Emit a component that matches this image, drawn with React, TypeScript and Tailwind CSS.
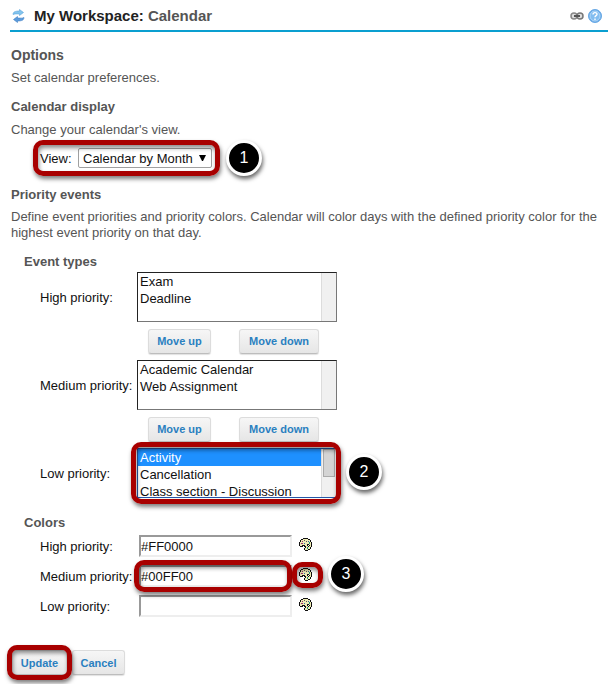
import type { ReactNode } from "react";

function Highlight({ className }: { className: string }) {
  return (
    <span
      aria-hidden="true"
      className={`pointer-events-none absolute z-10 rounded-[10px] border-[5px] border-[#a80000] shadow-[1px_3px_4px_rgba(0,0,0,0.5),inset_1px_3px_4px_rgba(0,0,0,0.45)] ${className}`}
    />
  );
}

function Step({ n, className }: { n: number; className: string }) {
  return (
    <span
      className={`absolute z-20 flex size-9 items-center justify-center rounded-full border-[3px] border-white bg-black text-base text-white shadow-[1px_3px_4px_rgba(0,0,0,0.6)] ${className}`}
    >
      {n}
    </span>
  );
}

function Button({ children, className = "" }: { children: ReactNode; className?: string }) {
  return (
    <button
      type="button"
      className={`h-[25px] rounded-[3px] border border-[#dcdcdc] border-b-[#bdbdbd] bg-linear-to-b from-[#f6f6f6] to-[#e6e6e6] text-[11px] leading-4 font-bold text-[#2a80c0] shadow-[0_1px_1px_rgba(0,0,0,0.12)] ${className}`}
    >
      {children}
    </button>
  );
}

function Palette() {
  return (
    <svg width="14" height="14" viewBox="0 0 14 14" shapeRendering="crispEdges" aria-hidden="true">
      <path
        d="M4 0H9V1H11V2H12V4H13V9H12V11H11V12H9V13H6V12H5V10H6V9H5V8H4V9H1V8H0V4H1V2H2V1H4Z"
        fill="#111"
      />
      <path
        d="M4 1H9V2H11V4H12V9H11V11H9V12H6V10H7V8H6V7H3V8H1V4H2V2H4Z"
        fill="#eeebb4"
      />
      <path d="M8 6h2v1h1v1h-1v1H9V8H8z" fill="#111" />
      <path d="M9 7h1v1H9z" fill="#fff" />
      <path d="M3 3h1v1H3zM2 5h2v1H2z" fill="#a03070" />
      <path d="M5 2h1v1H5zM7 3h1v1H7z" fill="#555" />
      <path d="M9 3h1v1H9zM5 5h1v1H5z" fill="#3060a0" />
      <path d="M10 4h1v2h-1zM8 9h1v2H8z" fill="#189878" />
    </svg>
  );
}

function EventList({
  id,
  label,
  items,
  selected = [],
  scrolls = false,
  marker,
}: {
  id: string;
  label: string;
  items: string[];
  selected?: string[];
  scrolls?: boolean;
  marker?: ReactNode;
}) {
  return (
    <div className="flex items-center">
      <label htmlFor={id} className="w-[97px] pt-[2px] whitespace-nowrap">
        {label}
      </label>
      <div
        className={`relative flex h-[50px] w-[200px] border ${
          scrolls ? "border-[#2458a8]" : "border-t-[#222] border-r-[#777] border-b-[#777] border-l-[#222]"
        }`}
      >
        <select
          id={id}
          multiple
          size={3}
          defaultValue={selected}
          className="h-full min-w-0 flex-1 appearance-none overflow-hidden bg-white p-0 outline-none"
        >
          {items.map((item) => (
            <option
              key={item}
              className="h-[17px] min-h-0 px-[2px] pt-px pb-0 text-[13px] leading-4 checked:bg-[linear-gradient(#1e90ff,#1e90ff)] checked:[-webkit-text-fill-color:white]"
            >
              {item}
            </option>
          ))}
        </select>
        <div className="w-[15px] border-l border-[#dcdcdc] bg-[#f0f0f0]">
          {scrolls && <div className="ml-px h-7 w-3 border border-[#aaa] bg-[#d4d4d4]" />}
        </div>
        {marker}
      </div>
    </div>
  );
}

function MoveButtons() {
  return (
    <div className="ml-[108px] flex h-[38px] items-center gap-7">
      <Button className="w-[63px]">Move up</Button>
      <Button className="w-20">Move down</Button>
    </div>
  );
}

function ColorRow({
  id,
  label,
  value,
  marked = false,
}: {
  id: string;
  label: string;
  value: string;
  marked?: boolean;
}) {
  return (
    <div className="flex h-[30px] items-center">
      <label htmlFor={id} className="w-[99px] pt-[2px] whitespace-nowrap">
        {label}
      </label>
      <div className="relative mr-[7px] flex">
        <input
          id={id}
          type="text"
          defaultValue={value}
          className="h-[22px] w-[153px] border-2 border-t-[#999] border-r-[#eee] border-b-[#eee] border-l-[#999] bg-white text-[13px] outline-none"
        />
        {marked && <Highlight className="-inset-y-[5px] right-0 -left-[5px]" />}
      </div>
      <button type="button" aria-label={`Pick color, ${label}`} className="relative -mt-[2px]">
        <Palette />
        {marked && (
          <>
            <Highlight className="-inset-y-[6px] -right-[10px] -left-[7px]" />
            <Step n={3} className="-top-[12px] left-[29px]" />
          </>
        )}
      </button>
    </div>
  );
}

export default function App() {
  return (
    <main className="bg-white pb-[9px] font-['Liberation_Sans',Arial,sans-serif] text-[13px] leading-4 text-[#111]">
      <header className="mr-[2px] ml-[10px] flex h-8 items-center border-b-2 border-[#0a9fd0] pt-[2px] pr-[6px] pl-[2px]">
        <button type="button" aria-label="Reload">
          <svg width="13" height="14" viewBox="0 0 13 14" aria-hidden="true">
            <path d="M1 5.500C1 3 3 2 7.500 2V.5L11.500 3.500 7.500 6.500V5C4.500 5 3 4.500 1 5.500Z" fill="#83c4ed" stroke="#5ba4dc" strokeWidth=".6" />
            <path d="M12 8.500C12 11 10 12 5.500 12V13.500L1.500 10.500 5.500 7.500V9C8.500 9 10 9.500 12 8.500Z" fill="#5b9bdc" stroke="#3f80c4" strokeWidth=".6" />
          </svg>
        </button>
        <h1 className="ml-[9px] text-[15px] font-bold text-[#222]">
          My Workspace: <span className="text-[#555]">Calendar</span>
        </h1>
        <div className="ml-auto flex items-center gap-1">
          <a href="#link" aria-label="Direct link">
            <svg width="14" height="8" viewBox="0 0 14 8" fill="none" aria-hidden="true">
              <rect x="1" y="1" width="6" height="6" rx="3" fill="#ddd" stroke="#888" strokeWidth="1.500" />
              <rect x="7" y="1" width="6" height="6" rx="3" fill="#ddd" stroke="#777" strokeWidth="1.500" />
              <path d="M4 4h6" stroke="#555" strokeWidth="2" />
            </svg>
          </a>
          <a href="#help" aria-label="Help">
            <svg width="14" height="14" viewBox="0 0 14 14" aria-hidden="true">
              <circle cx="7" cy="7" r="6.500" fill="#66a9e8" stroke="#68a8e4" />
              <circle cx="7" cy="7" r="5" fill="#82bdf0" stroke="#c3e0f8" strokeWidth=".8" />
              <path d="M5 5.500C5 3 9 3 9 5.300 9 6.800 7 6.600 7 8.300M7 9.500V11" fill="none" stroke="#fff" strokeWidth="1.400" />
            </svg>
          </a>
        </div>
      </header>

      <div className="px-[11px] text-[#555]">
        <h2 className="mt-[15px] text-[14px] font-bold">Options</h2>
        <p className="mt-[7px]">Set calendar preferences.</p>
        <h3 className="mt-[13px] font-bold">Calendar display</h3>
        <p className="mt-[7px]">Change your calendar's view.</p>
      </div>

      <div className="mt-[10px] ml-10 flex">
        <div className="relative flex items-center">
          <label htmlFor="view" className="w-[38px] pt-[2px]">
            View:
          </label>
          <div className="relative">
            <select
              id="view"
              className="h-5 w-[134px] appearance-none rounded-[2px] border border-[#a0a0a0] bg-white pt-[2px] pl-1 text-[13px] leading-4 outline-none"
            >
              <option>Calendar by Month</option>
              <option>Calendar by Week</option>
            </select>
            <svg width="7" height="6" viewBox="0 0 7 6" className="pointer-events-none absolute top-[7px] right-[6px]" aria-hidden="true">
              <path d="M0 0H7L4 6H3Z" fill="#000" />
            </svg>
          </div>
          <Highlight className="-top-2 -right-[8px] -bottom-[8px] -left-[7px]" />
          <Step n={1} className="-top-[8px] left-[186px]" />
        </div>
      </div>

      <div className="px-[11px] text-[#555]">
        <h3 className="mt-[19px] font-bold">Priority events</h3>
        <p className="mt-[6px]">
          Define event priorities and priority colors. Calendar will color days with the defined priority color for the
          highest event priority on that day.
        </p>
      </div>

      <section className="pl-10">
        <h4 className="mt-[13px] -ml-4 font-bold text-[#555]">Event types</h4>
        <div className="mt-[2px]">
          <EventList id="high-events" label="High priority:" items={["Exam", "Deadline"]} />
          <MoveButtons />
          <EventList id="medium-events" label="Medium priority:" items={["Academic Calendar", "Web Assignment"]} />
          <MoveButtons />
          <EventList
            id="low-events"
            label="Low priority:"
            items={["Activity", "Cancellation", "Class section - Discussion"]}
            selected={["Activity"]}
            scrolls
            marker={
              <>
                <Highlight className="-inset-y-[7px] -right-[5px] -left-[7px]" />
                <Step n={2} className="top-[5px] left-[208px]" />
              </>
            }
          />
        </div>
      </section>

      <section className="pl-10">
        <h4 className="mt-[17px] -ml-4 font-bold text-[#555]">Colors</h4>
        <div>
          <ColorRow id="high-color" label="High priority:" value="#FF0000" />
          <ColorRow id="medium-color" label="Medium priority:" value="#00FF00" marked />
          <ColorRow id="low-color" label="Low priority:" value="" />
        </div>
      </section>

      <div className="mt-[29px] ml-3 flex gap-[5px]">
        <div className="relative flex">
          <Button className="w-[55px]">Update</Button>
          <Highlight className="-inset-x-[5px] -inset-y-[5px]" />
        </div>
        <Button className="w-[53px]">Cancel</Button>
      </div>
    </main>
  );
}
